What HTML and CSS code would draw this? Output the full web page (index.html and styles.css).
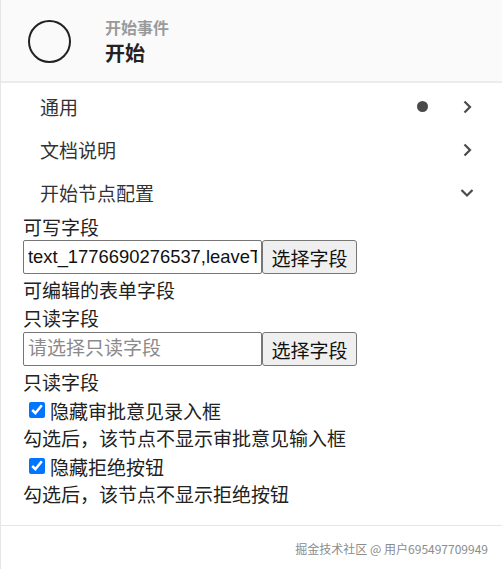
FILE: index.html
```html
<!DOCTYPE html>
<html lang="zh">
<head>
<meta charset="utf-8">
<title>开始</title>
<link rel="stylesheet" href="styles.css">
</head>
<body>
<div class="panel">
  <header class="head">
    <div class="event-icon"></div>
    <div class="head-text">
      <div class="head-type">开始事件</div>
      <div class="head-name">开始</div>
    </div>
  </header>
  <nav class="menu">
    <div class="menu-row">
      <span class="menu-label">通用</span>
      <span class="dot"></span>
      <svg class="chev" width="14" height="14" viewBox="0 0 14 14"><path d="M4.5 1.5 L10 7 L4.5 12.5" fill="none" stroke="#4a4a4a" stroke-width="2.2"/></svg>
    </div>
    <div class="menu-row">
      <span class="menu-label">文档说明</span>
      <svg class="chev" width="14" height="14" viewBox="0 0 14 14"><path d="M4.5 1.5 L10 7 L4.5 12.5" fill="none" stroke="#4a4a4a" stroke-width="2.2"/></svg>
    </div>
    <div class="menu-row">
      <span class="menu-label">开始节点配置</span>
      <svg class="chev" width="14" height="14" viewBox="0 0 14 14"><path d="M1.5 4 L7 9.5 L12.5 4" fill="none" stroke="#4a4a4a" stroke-width="2.2"/></svg>
    </div>
  </nav>
  <section class="config">
    <div class="label first">可写字段</div>
    <div class="field-row">
      <input class="field-input" type="text" value="text_1776690276537,leaveType">
      <button class="field-btn" type="button">选择字段</button>
    </div>
    <div class="label">可编辑的表单字段</div>
    <div class="label">只读字段</div>
    <div class="field-row">
      <input class="field-input" type="text" placeholder="请选择只读字段">
      <button class="field-btn" type="button">选择字段</button>
    </div>
    <div class="label">只读字段</div>
    <label class="check-row"><input type="checkbox" class="check" checked>隐藏审批意见录入框</label>
    <div class="label">勾选后，该节点不显示审批意见输入框</div>
    <label class="check-row"><input type="checkbox" class="check" checked>隐藏拒绝按钮</label>
    <div class="label">勾选后，该节点不显示拒绝按钮</div>
  </section>
  <footer class="foot">掘金技术社区 @ 用户695497709949</footer>
</div>
</body>
</html>
```
FILE: styles.css
```css
html, body {
  margin: 0;
  padding: 0;
  background: #fff;
}
body {
  font-family: "Noto Sans CJK SC", "Noto Sans", sans-serif;
  color: #222;
}
.panel {
  border-left: 1px solid #e6e6e6;
  min-height: 569px;
  box-sizing: border-box;
}
.head {
  height: 81px;
  background: #fafafa;
  border-bottom: 2px solid #ececec;
  display: flex;
  align-items: center;
  padding-left: 27px;
}
.event-icon {
  width: 39px;
  height: 39px;
  border: 2px solid #222;
  border-radius: 50%;
  margin-top: 1px;
}
.head-text {
  margin-left: 34px;
  margin-top: 2px;
  display: flex;
  flex-direction: column;
}
.head-type {
  font-size: 16px;
  line-height: 23px;
  font-weight: bold;
  color: #9a9a9a;
}
.head-name {
  font-size: 20px;
  line-height: 28px;
  font-weight: bold;
  color: #222;
}
.menu {
  margin-top: 2px;
}
.menu-row {
  height: 43px;
  display: flex;
  align-items: center;
  padding: 0 28px 0 39px;
}
.menu-label {
  flex: 1;
  font-size: 19px;
  color: #333;
}
.dot {
  width: 11px;
  height: 11px;
  border-radius: 50%;
  background: #4a4a4a;
  margin-right: 32px;
}
.chev {
  display: block;
}
.config {
  padding-left: 22px;
  font-size: 19px;
}
.label {
  line-height: 28px;
  color: #222;
}
.label.first {
  line-height: 26px;
}
.field-row {
  display: flex;
  height: 34px;
  margin-bottom: 2px;
}
.field-input {
  width: 239px;
  height: 34px;
  box-sizing: border-box;
  border: 1px solid #767676;
  border-radius: 2px;
  padding: 0 4px;
  font-family: "Liberation Sans", "Noto Sans CJK SC", sans-serif;
  font-size: 18.4px;
  color: #111;
  margin: 0;
}
.field-input::placeholder {
  font-family: "Noto Sans CJK SC", sans-serif;
  color: #8a8a8a;
  font-size: 19px;
}
.field-btn {
  width: 95px;
  height: 34px;
  box-sizing: border-box;
  border: 1px solid #767676;
  border-radius: 3px;
  background: #efefef;
  font-family: "Noto Sans CJK SC", sans-serif;
  font-size: 19px;
  color: #111;
  padding: 0;
  margin: 0;
}
.check-row {
  display: flex;
  align-items: center;
  height: 28px;
  color: #222;
}
.check {
  width: 16px;
  height: 16px;
  margin: 0 5px 0 6px;
}
.foot {
  margin-top: 17px;
  border-top: 1px solid #e6e6e6;
  height: 43px;
  box-sizing: border-box;
  padding: 15px 14px 0 0;
  text-align: right;
  font-size: 12px;
  line-height: 16px;
  color: #8c8c8c;
}
```
